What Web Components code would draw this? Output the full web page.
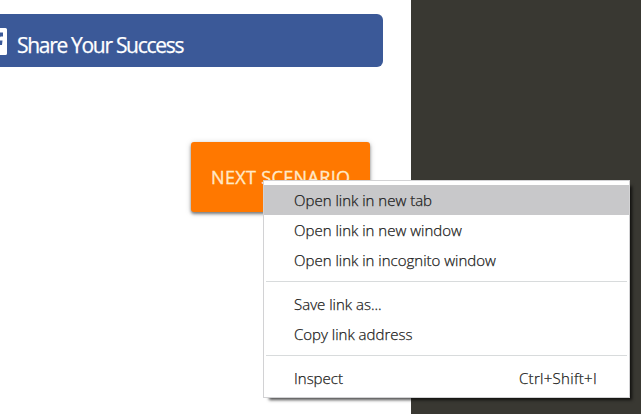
<!DOCTYPE html>
<html lang="en">
<head>
<meta charset="utf-8">
<title>Next scenario</title>
<style>
html, body { margin: 0; height: 100%; overflow: hidden; background: #fff; }
body { font-family: "Open Sans", "Noto Sans", sans-serif; }
</style>
</head>
<body>
<scenario-page>
  <share-button>Share Your Success</share-button>
  <next-button>NEXT SCENARIO</next-button>
  <context-menu slot="overlay">
    <menu-item active>Open link in new tab</menu-item>
    <menu-item>Open link in new window</menu-item>
    <menu-item>Open link in incognito window</menu-item>
    <menu-divider></menu-divider>
    <menu-item>Save link as...</menu-item>
    <menu-item>Copy link address</menu-item>
    <menu-divider></menu-divider>
    <menu-item>Inspect<span slot="shortcut">Ctrl+Shift+I</span></menu-item>
  </context-menu>
</scenario-page>
<script>
const define = (name, html) => customElements.define(name, class extends HTMLElement {
  constructor() {
    super();
    this.attachShadow({ mode: 'open' }).innerHTML = html;
  }
});

define('scenario-page', `
<style>
:host { display: grid; grid-template-columns: 411px 1fr; height: 414px; position: relative; overflow: hidden; }
main { display: flex; flex-direction: column; align-items: flex-start; gap: 75px; padding-top: 14px; background: #fff; }
aside { background: #393832; }
</style>
<main><slot></slot></main><aside></aside><slot name="overlay"></slot>`);

define('share-button', `
<style>
:host { display: flex; align-items: center; box-sizing: border-box; width: 383px; height: 53px;
  background: #3b5998; color: #fff; border-radius: 0 6px 6px 0; font-size: 21px; letter-spacing: -1.3px; white-space: nowrap;
  -webkit-text-stroke: .25px #fff; }
svg { display: block; flex: none; margin: 2px 10px 0 0; }
span { padding-top: 9px; line-height: 28px; }
</style>
<svg width="7" height="27" viewBox="0 0 7 27"><path fill="#fff" d="M0 0H5.500Q7 0 7 1.500V25.500Q7 27 5.500 27H0V17H2L2.500 12.500H0V9.500Q0 8.500 1 8.500H3V4.500H0Z"/></svg>
<span><slot></slot></span>`);

define('next-button', `
<style>
:host { display: flex; align-items: center; box-sizing: border-box; width: 179px; height: 70px; margin-left: 191px; padding-left: 20px;
  background: #ff7800; color: #ffe9c8; border-radius: 3px; font-size: 18px; letter-spacing: .35px; line-height: 26px; white-space: nowrap;
  -webkit-text-stroke: .35px #ffe9c8;
  box-shadow: 0 2px 3px rgba(0,0,0,.45), 0 1px 6px rgba(0,0,0,.18); }
</style><span><slot></slot></span>`);

define('context-menu', `
<style>
:host { display: block; position: absolute; left: 263px; top: 180px; box-sizing: border-box; width: 367px; height: 218px;
  padding: 4px 0 3px; border: 1px solid #d2d2d4; background: #fff; color: #1c1c20; box-shadow: 4px 4px 3px -2px rgba(0,0,0,.7); }
</style><slot></slot>`);

define('menu-item', `
<style>
:host { display: flex; justify-content: space-between; align-items: center; box-sizing: border-box; height: 30px;
  padding: 0 32px 1px 30px; font-size: 15px; font-weight: 300; line-height: 20px; white-space: nowrap;
  -webkit-text-stroke: .25px #1c1c20; }
:host([active]) { background: #c8c8ca; }
::slotted([slot=shortcut]) { letter-spacing: .3px; }
</style><span><slot></slot></span><slot name="shortcut"></slot>`);

define('menu-divider', `
<style>
:host { display: block; height: 1px; margin: 6px 2px 7px; background: #d8dbdc; }
</style>`);
</script>
</body>
</html>
